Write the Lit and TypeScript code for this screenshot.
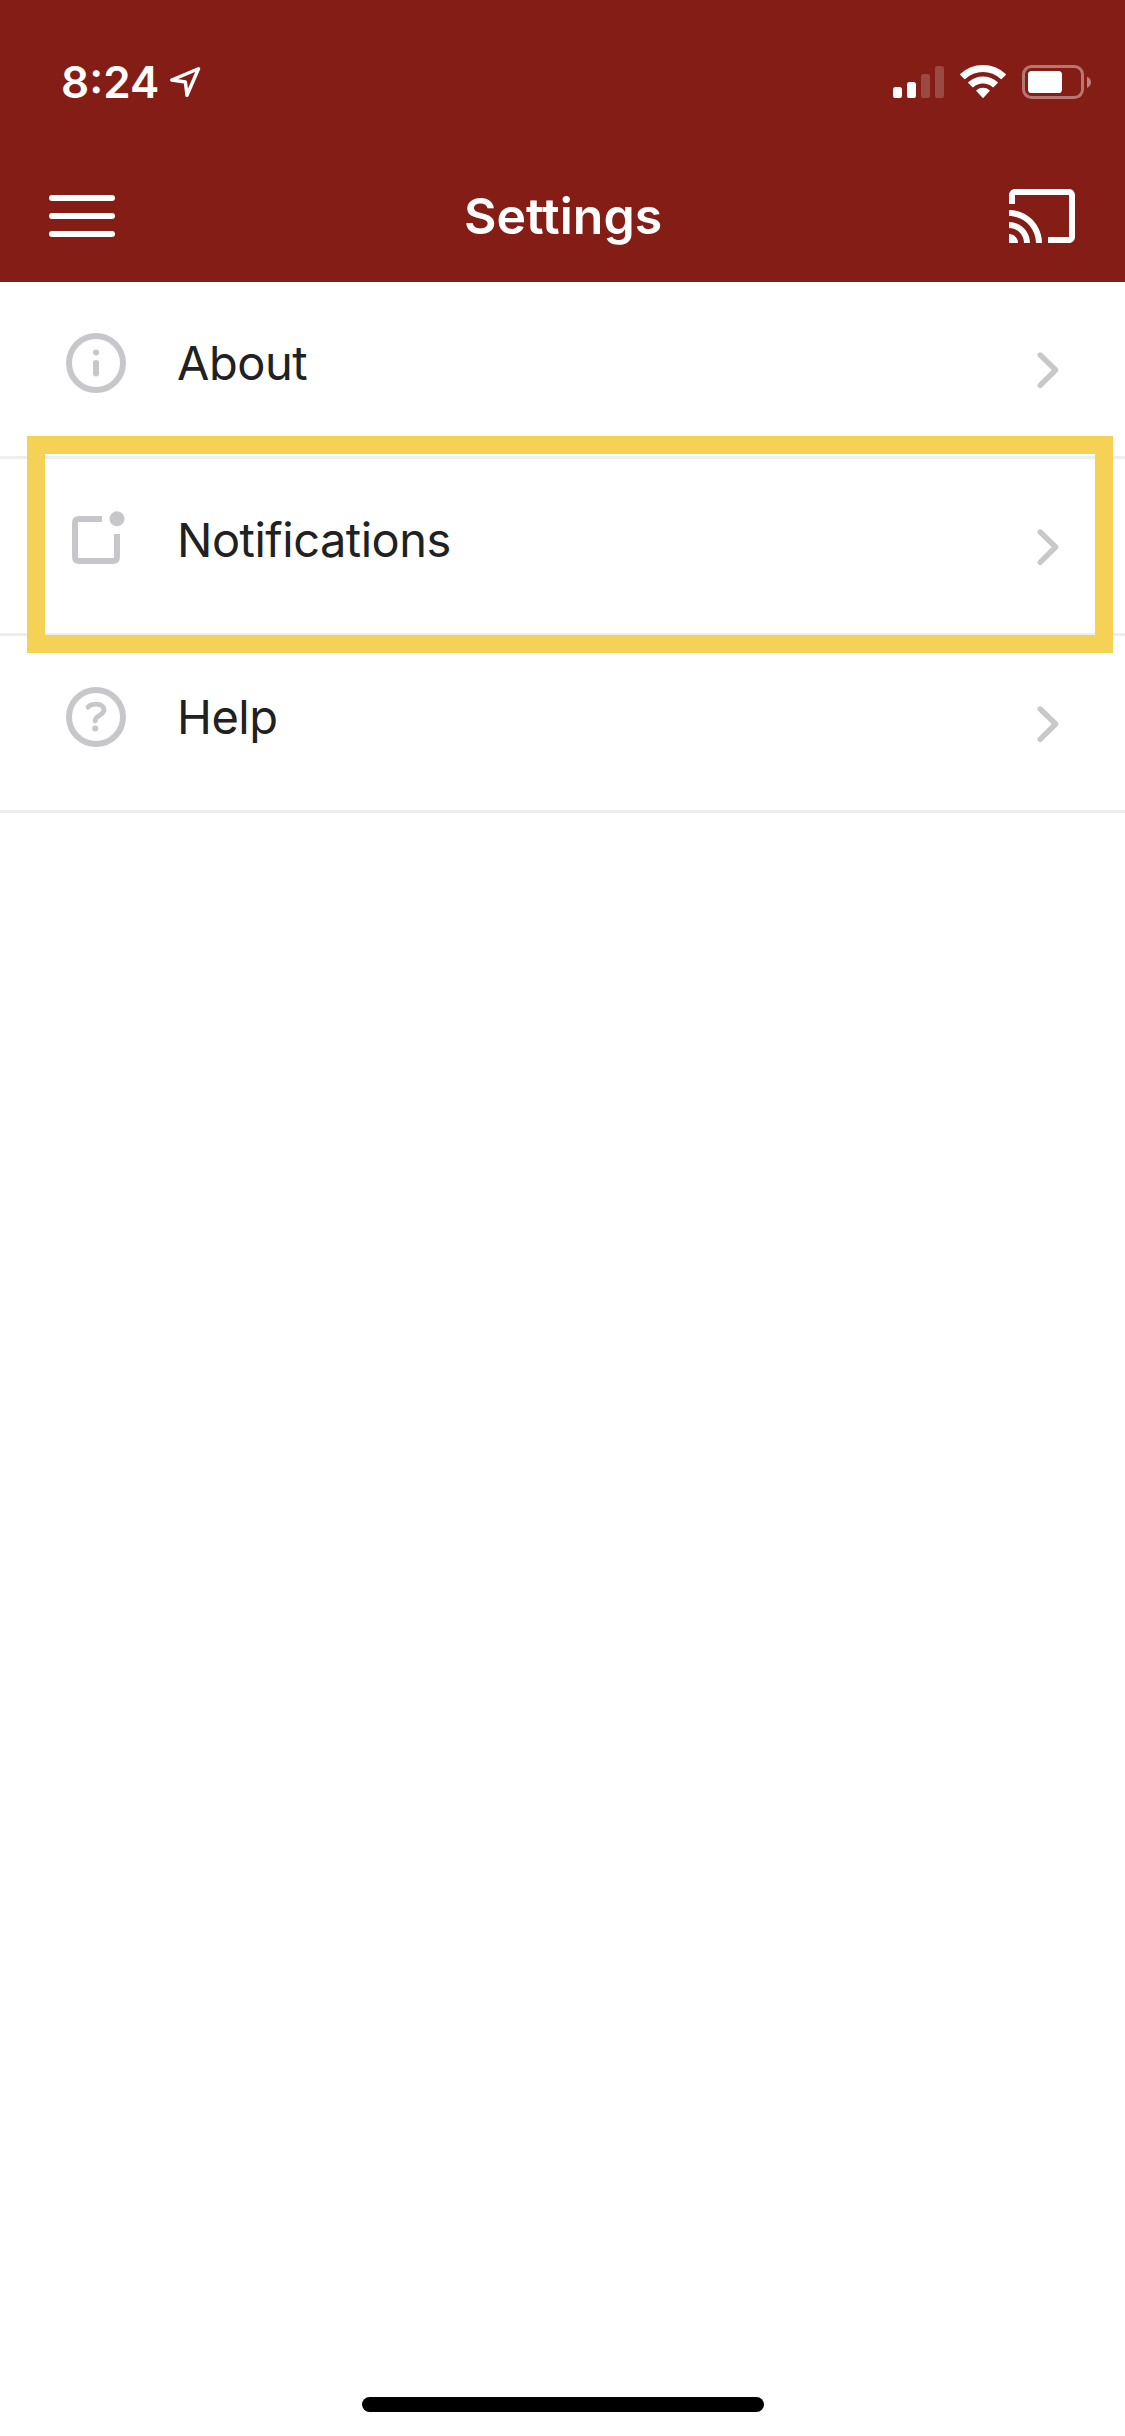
import { LitElement, html, svg, css } from "lit";
import { customElement, property } from "lit/decorators.js";

type IconName = "info" | "notifications" | "help";

interface SettingsItem {
  icon: IconName;
  label: string;
  highlighted?: boolean;
}

const ITEMS: SettingsItem[] = [
  { icon: "info", label: "About" },
  { icon: "notifications", label: "Notifications", highlighted: true },
  { icon: "help", label: "Help" },
];

const ICONS = {
  info: svg`
    <circle cx="30" cy="30" r="27" fill="none" stroke="currentColor" stroke-width="6"/>
    <circle cx="30" cy="19.6" r="3" fill="currentColor"/>
    <path d="M30 30V40.6" fill="none" stroke="currentColor" stroke-width="6" stroke-linecap="round"/>`,
  notifications: svg`
    <path d="M36 9H13Q9 9 9 13V47Q9 51 13 51H47Q51 51 51 47V24" fill="none" stroke="currentColor" stroke-width="6"/>
    <circle cx="51" cy="8.8" r="7.5" fill="currentColor"/>`,
  help: svg`
    <circle cx="30" cy="30" r="27" fill="none" stroke="currentColor" stroke-width="6"/>
    <path d="M22 20.2C24.5 16.6 33 15.8 36.6 19.4C39.4 22.6 37.6 26.6 33.2 28.6C30.6 29.8 29.2 31 29.2 34" fill="none" stroke="currentColor" stroke-width="4.8" stroke-linecap="round"/>
    <circle cx="29.2" cy="41.6" r="3" fill="currentColor"/>`,
};

@customElement("status-bar")
class StatusBar extends LitElement {
  static styles = css`
    :host {
      display: flex;
      align-items: center;
      box-sizing: border-box;
      height: 150px;
      padding: 14px 34px 0 61px;
      color: #fff;
    }
    svg { display: block; flex: none; }
    .time {
      font-size: 44px;
      font-weight: 600;
      line-height: 54px;
      width: 109px;
      white-space: nowrap;
    }
    .spacer { flex: 1; }
    .wifi { margin: 0 16px; }
  `;
  render() {
    return html`
      <div class="time">8:24</div>
      <svg width="32" height="32" viewBox="170 66 32 32">
        <path d="M198.5 68.8L171.8 80L185.4 82L187 95.2Z" fill="none" stroke="#fff" stroke-width="3.4" stroke-linejoin="round"/>
      </svg>
      <div class="spacer"></div>
      <svg width="51" height="34" viewBox="893 65 51 34">
        <g fill="#fff">
          <rect x="893" y="87" width="9" height="11" rx="2.6"/>
          <rect x="907" y="82" width="9" height="16" rx="2.6"/>
          <rect x="921" y="74" width="9" height="24" rx="2.6" opacity=".2"/>
          <rect x="935" y="66" width="9" height="32" rx="2.6" opacity=".2"/>
        </g>
      </svg>
      <svg class="wifi" width="46" height="34" viewBox="960 65 46 34">
        <g fill="#fff" stroke="#fff" stroke-width="1.2" stroke-linejoin="round">
          <path d="M960.7 74.5A32.5 32.5 0 0 1 1005.3 74.5L1001.2 78.6A26.6 26.6 0 0 0 964.8 78.6Z"/>
          <path d="M968.7 82.6A21 21 0 0 1 997.3 82.6L993.1 86.7A15 15 0 0 0 972.9 86.7Z"/>
          <path d="M976.8 90.6A9.6 9.6 0 0 1 989.2 90.6L983 97.4Z"/>
        </g>
      </svg>
      <svg width="69" height="34" viewBox="1022 65 69 34">
        <rect x="1023.5" y="66.5" width="59" height="31" rx="8" fill="none" stroke="#fff" stroke-width="3" opacity=".4"/>
        <rect x="1028" y="71" width="34" height="22" rx="3.6" fill="#fff"/>
        <path d="M1087 76.5Q1091 78.6 1091 82.2T1087 88Z" fill="#fff" opacity=".45"/>
      </svg>
    `;
  }
}

@customElement("nav-bar")
class NavBar extends LitElement {
  @property() heading = "";
  static styles = css`
    :host {
      display: flex;
      align-items: center;
      justify-content: space-between;
      height: 132px;
      padding: 0 50px 0 49px;
      color: #fff;
    }
    svg { display: block; }
    .title {
      font-size: 50px;
      font-weight: 600;
      line-height: 60px;
      padding-left: 2px;
    }
  `;
  render() {
    return html`
      <svg width="66" height="42" viewBox="0 0 66 42">
        <path d="M3 3H63M3 21H63M3 39H63" stroke="#fff" stroke-width="6" stroke-linecap="round"/>
      </svg>
      <div class="title">${this.heading}</div>
      <svg width="66" height="54" viewBox="1 3 22 18">
        <path fill="#fff" d="M21 3H3c-1.1 0-2 .9-2 2v3h2V5h18v14h-7v2h7c1.1 0 2-.9 2-2V5c0-1.1-.9-2-2-2zM1 18v3h3c0-1.66-1.34-3-3-3zm0-4v2c2.76 0 5 2.24 5 5h2c0-3.87-3.13-7-7-7zm0-4v2c4.97 0 9 4.03 9 9h2c0-6.08-4.93-11-11-11z"/>
      </svg>
    `;
  }
}

@customElement("settings-row")
class SettingsRow extends LitElement {
  @property() icon: IconName = "info";
  @property() label = "";
  @property({ type: Boolean }) highlighted = false;
  static styles = css`
    :host {
      display: block;
      position: relative;
      box-sizing: border-box;
      height: 177px;
      border-bottom: 3px solid #eee;
    }
    .row {
      display: flex;
      align-items: center;
      height: 174px;
      padding: 0 65px 0 66px;
    }
    svg { display: block; flex: none; }
    .lead {
      display: flex;
      align-items: center;
      flex: 1;
      gap: 51px;
      padding-bottom: 12px;
      color: #c7c7cb;
    }
    .label {
      color: #212121;
      font-size: 47px;
      line-height: 58px;
      letter-spacing: -0.5px;
      white-space: nowrap;
    }
    .chevron { margin-top: 2px; }
    .highlight {
      position: absolute;
      z-index: 1;
      box-sizing: border-box;
      top: -23px;
      left: 27px;
      width: 1086px;
      height: 217px;
      border: 18px solid #f5d155;
    }
  `;
  render() {
    return html`
      <div class="row">
        <div class="lead">
          <svg width="60" height="60" viewBox="0 0 60 60">${ICONS[this.icon]}</svg>
          <div class="label">${this.label}</div>
        </div>
        <svg class="chevron" width="23" height="38" viewBox="0 0 23 38">
          <path d="M3.2 4L18.6 19L3.2 34.4" fill="none" stroke="#c8c8c8" stroke-width="5.4" stroke-linecap="round" stroke-linejoin="round"/>
        </svg>
      </div>
      ${this.highlighted ? html`<div class="highlight"></div>` : null}
    `;
  }
}

@customElement("app-root")
class AppRoot extends LitElement {
  static styles = css`
    :host {
      display: flex;
      flex-direction: column;
      box-sizing: border-box;
      width: 1125px;
      height: 2436px;
      background: #fff;
      font-family: Inter, "Liberation Sans", sans-serif;
      overflow: hidden;
    }
    .header { background: #831d15; }
    .list { flex: 1; }
    .home {
      align-self: center;
      width: 402px;
      height: 15px;
      margin-bottom: 24px;
      border-radius: 8px;
      background: #000;
    }
  `;
  render() {
    return html`
      <div class="header">
        <status-bar></status-bar>
        <nav-bar heading="Settings"></nav-bar>
      </div>
      <div class="list">
        ${ITEMS.map(
          (item) => html`<settings-row
            .icon=${item.icon}
            .label=${item.label}
            ?highlighted=${item.highlighted}
          ></settings-row>`
        )}
      </div>
      <div class="home"></div>
    `;
  }
}
